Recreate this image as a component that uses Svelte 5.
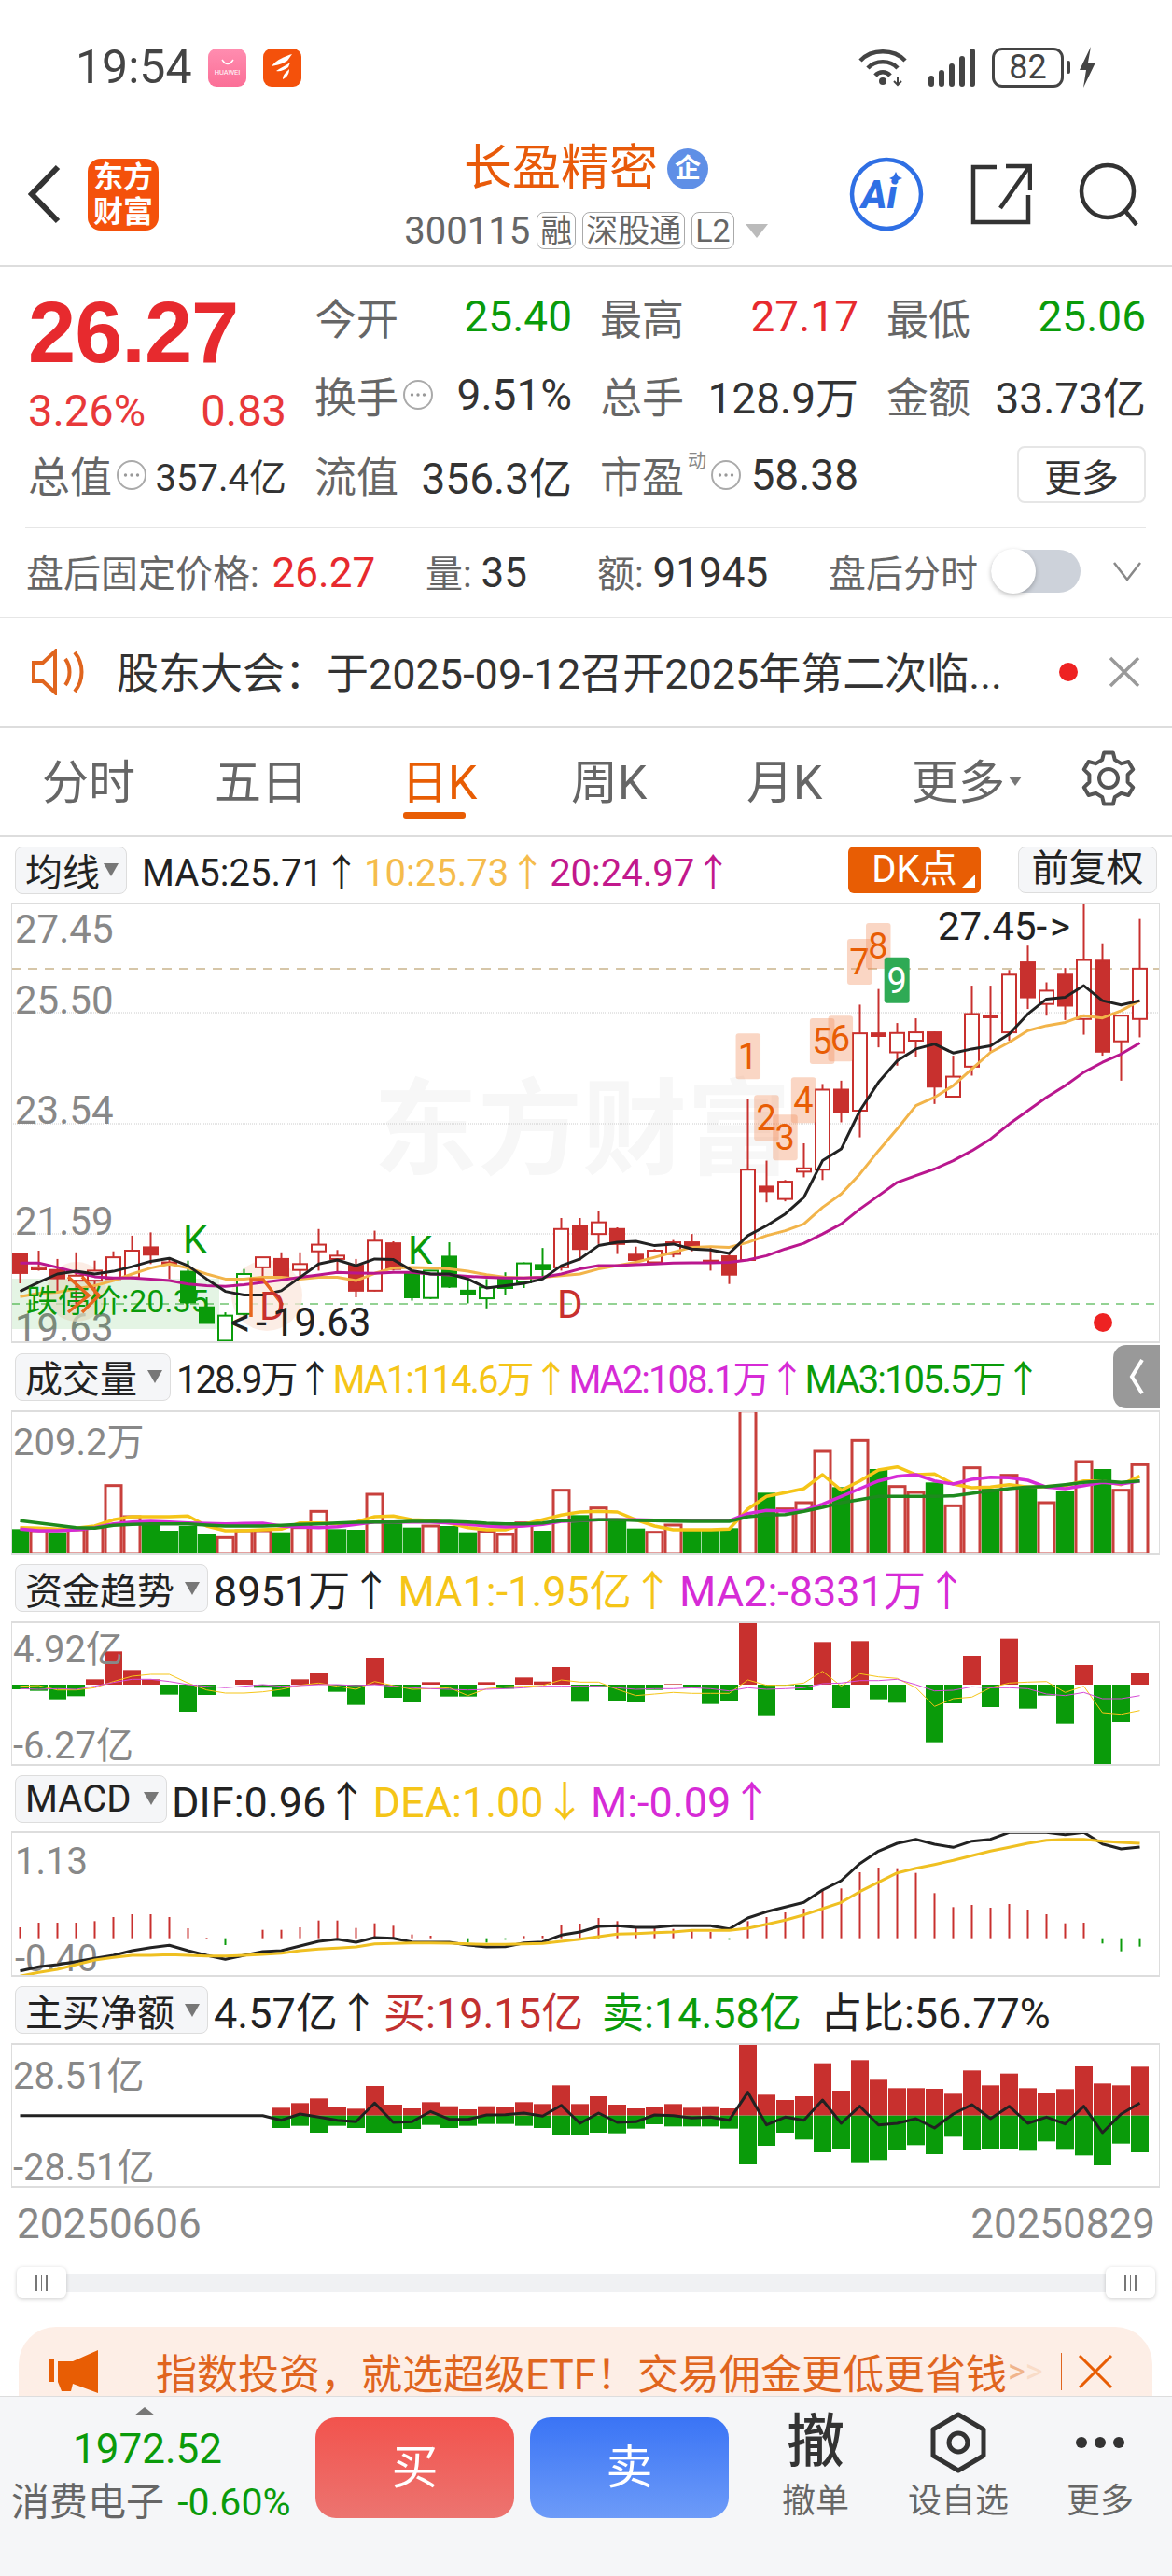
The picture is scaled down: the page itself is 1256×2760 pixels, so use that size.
<script>
	// all chart values below are read off in "zoom" units, converted to page y by each chart
	const xAt = (i) => 21.5 + 20 * i;
	const k = (z) => 890 + z / 2.8;
	const low = (z) => 1440 + z / 3;
	const macdY = (z) => 1900 + z / 3;
	const line = (ys, conv, from = 0) =>
		ys.map((z, i) => `${xAt(i + from)},${conv(z).toFixed(1)}`).join(' ');

	// high, top, bottom, low, kind: r filled red, h hollow red, g filled green, o hollow green
	const candles = [
		[1270, 1270, 1327, 1358, 'r'], [1260, 1310, 1316, 1320, 'h'], [1285, 1318, 1343, 1385, 'r'],
		[1265, 1335, 1350, 1420, 'h'], [1290, 1320, 1350, 1400, 'h'], [1262, 1280, 1345, 1350, 'h'],
		[1215, 1260, 1340, 1345, 'h'], [1205, 1250, 1272, 1300, 'r'], [1280, 1295, 1300, 1345, 'h'],
		[1290, 1323, 1415, 1420, 'g'], [1400, 1430, 1477, 1478, 'g'], [1445, 1455, 1530, 1540, 'o'],
		[1315, 1330, 1450, 1455, 'o'], [1280, 1280, 1310, 1345, 'h'], [1265, 1285, 1340, 1345, 'r'],
		[1265, 1300, 1318, 1340, 'h'], [1195, 1242, 1262, 1320, 'h'], [1258, 1275, 1285, 1330, 'h'],
		[1285, 1305, 1380, 1400, 'r'], [1200, 1230, 1380, 1382, 'h'], [1232, 1238, 1315, 1320, 'r'],
		[1320, 1330, 1400, 1410, 'g'], [1320, 1320, 1402, 1405, 'o'], [1235, 1278, 1368, 1372, 'g'],
		[1350, 1380, 1390, 1418, 'g'], [1345, 1370, 1403, 1433, 'o'], [1325, 1345, 1372, 1392, 'g'],
		[1295, 1298, 1355, 1372, 'o'], [1252, 1303, 1316, 1345, 'g'], [1162, 1195, 1310, 1320, 'h'],
		[1162, 1185, 1255, 1290, 'r'], [1140, 1175, 1210, 1240, 'h'], [1190, 1195, 1240, 1270, 'r'],
		[1248, 1272, 1288, 1295, 'r'], [1255, 1260, 1295, 1298, 'h'], [1228, 1235, 1270, 1280, 'h'],
		[1210, 1235, 1250, 1262, 'r'], [1250, 1290, 1296, 1320, 'r'], [1268, 1277, 1332, 1360, 'r'],
		[805, 1017, 1288, 1290, 'h'], [990, 1068, 1082, 1115, 'r'], [1048, 1053, 1105, 1112, 'h'],
		[938, 1013, 1023, 1040, 'h'], [760, 777, 1017, 1048, 'h'], [750, 777, 845, 875, 'r'],
		[522, 608, 840, 920, 'h'], [475, 608, 616, 650, 'r'], [577, 607, 665, 705, 'h'],
		[563, 605, 630, 678, 'h'], [603, 605, 768, 820, 'r'], [675, 738, 798, 800, 'h'],
		[465, 550, 708, 735, 'h'], [465, 555, 560, 662, 'r'], [418, 432, 605, 630, 'h'],
		[345, 395, 500, 535, 'r'], [455, 480, 520, 555, 'h'], [412, 432, 525, 568, 'r'],
		[215, 388, 565, 612, 'h'], [338, 390, 663, 675, 'r'], [555, 555, 632, 750, 'h'],
		[265, 414, 565, 620, 'h']
	];
	const ma5 = [1382,1355,1330,1322,1330,1322,1308,1292,1283,1305,1345,1382,1393,1393,1380,1340,1300,1288,1305,1285,1287,1320,1330,1330,1345,1372,1365,1358,1345,1305,1285,1245,1235,1232,1245,1240,1255,1258,1268,1215,1185,1150,1100,990,955,840,755,690,655,640,667,655,645,610,550,505,500,465,510,523,510];
	const ma10 = [1398,1388,1385,1375,1365,1350,1330,1312,1300,1312,1330,1345,1345,1340,1340,1345,1340,1340,1350,1328,1312,1310,1312,1315,1322,1332,1340,1342,1340,1335,1330,1315,1305,1295,1280,1265,1250,1248,1250,1235,1215,1200,1180,1130,1090,1030,960,895,825,800,765,715,665,635,600,585,575,555,562,540,510];
	const ma20 = [1297,1297,1310,1325,1338,1342,1342,1345,1350,1360,1365,1367,1362,1355,1348,1340,1333,1325,1327,1328,1325,1325,1330,1333,1337,1340,1342,1342,1340,1330,1315,1305,1305,1302,1300,1297,1296,1296,1295,1288,1275,1255,1238,1210,1180,1135,1095,1055,1035,1015,990,960,925,880,840,800,765,725,695,670,637];

	const badges = [
		['1', 378, 608], ['2', 428, 793], ['3', 479, 852], ['4', 529, 740], ['5', 580, 563],
		['6', 630, 555], ['7', 682, 325], ['8', 733, 277]
	];

	// volume: top of bar, g = green filled, r = red hollow
	const vol = [[595,'g'],[600,'r'],[605,'g'],[597,'r'],[590,'r'],[455,'r'],[555,'r'],[580,'g'],[600,'g'],[585,'g'],[612,'g'],[622,'r'],[600,'r'],[600,'r'],[605,'g'],[590,'r'],[538,'r'],[595,'g'],[597,'g'],[483,'r'],[575,'g'],[590,'g'],[585,'r'],[585,'g'],[605,'g'],[603,'r'],[612,'r'],[575,'r'],[600,'g'],[470,'r'],[550,'g'],[527,'r'],[565,'g'],[593,'g'],[605,'r'],[582,'r'],[600,'g'],[595,'g'],[592,'g'],[215,'r'],[478,'g'],[530,'r'],[510,'r'],[345,'r'],[460,'g'],[310,'r'],[402,'g'],[458,'r'],[477,'r'],[445,'g'],[520,'r'],[398,'r'],[465,'g'],[422,'r'],[460,'g'],[510,'r'],[472,'g'],[378,'r'],[402,'g'],[470,'r'],[388,'r']];
	const volM1 = [590,592,595,592,585,565,555,555,555,553,585,600,600,597,595,575,575,578,572,555,553,565,567,575,590,597,597,580,565,550,540,538,540,565,585,597,597,597,595,530,490,478,465,420,470,440,405,395,420,418,450,462,460,452,460,458,455,440,440,452,425];
	const volM2 = [595,600,600,597,590,578,572,570,572,575,577,578,577,576,585,588,590,587,580,572,572,572,572,575,580,585,588,585,580,570,568,565,565,565,566,567,568,568,568,545,535,537,535,515,490,465,440,425,420,440,450,435,428,430,438,460,465,455,445,450,440];
	const volM3 = [568,575,583,590,592,583,580,578,578,578,582,585,585,585,583,580,578,575,573,572,572,570,570,570,572,576,578,578,575,568,567,565,565,567,568,569,570,570,570,555,550,548,538,525,510,500,490,490,490,490,488,480,472,465,460,458,452,445,440,445,440];

	const flow = [1110,1115,1142,1132,1078,988,1048,1078,1127,1182,1128,1095,1080,1105,1133,1078,1058,1118,1160,1008,1137,1152,1087,1133,1133,1087,1108,1072,1085,1038,1150,1100,1148,1152,1112,1093,1105,1157,1148,892,1196,1097,1113,958,1170,955,1142,1153,1095,1280,1155,1002,1167,947,1172,1130,1220,1032,1355,1215,1058];
	const flowM1 = [1100,1098,1112,1112,1105,1085,1068,1062,1062,1090,1112,1122,1122,1118,1110,1097,1090,1100,1110,1085,1098,1110,1108,1105,1130,1108,1102,1100,1098,1080,1087,1087,1110,1130,1125,1120,1123,1123,1123,1080,1097,1097,1090,1052,1100,1060,1070,1075,1105,1165,1140,1135,1105,1090,1087,1085,1120,1100,1185,1190,1178];
	const flowM2 = [1108,1110,1108,1110,1100,1088,1078,1078,1085,1095,1100,1105,1100,1095,1100,1098,1095,1095,1098,1095,1100,1105,1108,1110,1112,1110,1108,1105,1100,1100,1100,1100,1105,1110,1108,1108,1105,1108,1115,1105,1110,1108,1105,1092,1090,1082,1082,1078,1095,1115,1113,1102,1105,1105,1108,1125,1130,1120,1140,1140,1130];

	const macd = [495,480,480,480,475,462,453,453,462,498,528,552,530,503,503,495,473,473,497,482,490,518,522,530,544,544,535,523,522,487,483,465,475,495,497,500,505,510,535,475,462,447,435,375,370,318,303,305,320,385,430,423,432,420,438,453,482,480,547,572,557];
	const dif = [635,622,615,605,595,585,570,560,553,570,585,598,585,573,570,555,540,533,543,528,530,542,543,543,552,558,557,545,542,520,510,492,490,495,495,490,490,490,500,465,445,430,415,375,345,290,250,225,212,228,238,218,212,190,190,190,197,190,227,243,237];
	const dea = [652,640,630,615,600,592,585,585,583,585,587,587,585,582,578,570,565,562,558,548,547,545,545,546,548,550,550,548,547,540,533,525,517,515,512,510,505,505,505,498,485,472,455,435,415,380,350,320,305,293,280,265,250,238,225,215,212,212,218,222,225];

	// net buy starts at bar 14: top, bottom
	const net = [[1075,1140],[1060,1133],[1045,1155],[1072,1133],[1078,1140],[1005,1155],[1065,1155],[1077,1143],[1057,1130],[1070,1140],[1080,1133],[1070,1127],[1073,1127],[1057,1133],[1063,1140],[1003,1163],[1063,1163],[1038,1155],[1065,1157],[1077,1142],[1072,1128],[1063,1135],[1075,1135],[1070,1135],[1077,1142],[868,1257],[1033,1197],[1050,1155],[1038,1177],[932,1218],[1020,1207],[922,1250],[985,1243],[1012,1212],[1012,1195],[1014,1224],[1030,1168],[955,1212],[1003,1209],[965,1207],[1012,1213],[1027,1183],[1015,1210],[942,1228],[997,1260],[1003,1190],[943,1218]];
	const netLine = [1100,1100,1100,1100,1100,1100,1100,1100,1100,1100,1100,1100,1100,1100,1115,1095,1105,1115,1120,1060,1122,1120,1087,1112,1112,1098,1097,1092,1102,1067,1125,1092,1122,1120,1098,1100,1108,1105,1115,1025,1130,1105,1115,1050,1125,1070,1130,1125,1110,1140,1095,1065,1110,1070,1125,1105,1127,1070,1155,1095,1060];

	const gear = [];
	for (let n = 0; n < 6; n++) {
		const a = n * 60 - 90;
		for (const [d, r] of [[-19, 21], [-10, 28], [10, 28], [19, 21]]) {
			const t = ((a + d) * Math.PI) / 180;
			gear.push(`${(30 + r * Math.cos(t)).toFixed(1)},${(30 + r * Math.sin(t)).toFixed(1)}`);
		}
	}
</script>

{#snippet dots()}
	<svg class="dots" width="34" height="34" viewBox="0 0 34 34">
		<circle cx="17" cy="17" r="15" fill="none" stroke="#aaa" stroke-width="2" />
		<circle cx="10.5" cy="17" r="1.7" fill="#999" /><circle cx="17" cy="17" r="1.7" fill="#999" /><circle cx="23.5" cy="17" r="1.7" fill="#999" />
	</svg>
{/snippet}

{#snippet pick(name, cls)}
	<div class="pick {cls}">{name}<i class="tri"></i></div>
{/snippet}

<div class="page">
	<div class="status">
		<span class="time">19:54</span>
		<div class="app pink">
			<svg width="16" height="8" viewBox="0 0 16 8"><path d="M2 1q6 9 12 0" fill="none" stroke="#fff" stroke-width="1.5" /></svg>
			<span>HUAWEI</span>
		</div>
		<div class="app fox">
			<svg width="41" height="41" viewBox="0 0 41 41" fill="#fff">
				<path d="M31 6C24 8 14 12 9 19c6-1 13-3 17-6z" /><path d="M29 15c-4 3-11 6-15 9 4 1 9-1 13-4z" /><path d="M28 22c-3 3-7 6-7 11 4-2 7-5 7-11z" />
			</svg>
		</div>
		<div class="sys">
			<svg class="wifi" width="52" height="42" viewBox="0 0 52 42" fill="none" stroke="#444" stroke-width="4.5">
				<path d="M2 14C14 1 38 1 50 14" /><path d="M10 22C18 13 34 13 42 22" /><path d="M18 30C22 25 30 25 34 30" />
				<circle cx="26" cy="36" r="4" fill="#444" stroke="none" />
				<path d="M42 31v9M38 36l4 4 4-4" stroke-width="2" />
			</svg>
			<svg class="signal" width="52" height="42" viewBox="0 0 52 42" fill="#444">
				<rect x="0" y="30" width="6" height="12" rx="3" /><rect x="11" y="24" width="6" height="18" rx="3" /><rect x="22" y="17" width="6" height="25" rx="3" /><rect x="33" y="9" width="6" height="33" rx="3" /><rect x="44" y="1" width="6" height="41" rx="3" />
			</svg>
			<div class="batt">82</div>
			<i class="nub"></i>
			<svg class="bolt" width="20" height="44" viewBox="0 0 20 44"><path d="M14 0L2 25h7L6 44 19 17h-8z" fill="#444" /></svg>
		</div>
	</div>

	<div class="nav">
		<div class="nav-left">
			<svg width="36" height="64" viewBox="0 0 36 64"><path d="M32 3L4 32l28 29" fill="none" stroke="#333" stroke-width="6" /></svg>
			<div class="logo">东方<br />财富</div>
		</div>
		<div class="nav-mid">
			<div class="title">长盈精密<span class="qi">企</span></div>
			<div class="code">
				<span>300115</span><b class="tag">融</b><b class="tag">深股通</b><b class="tag">L2</b><i class="tri big"></i>
			</div>
		</div>
		<div class="nav-right">
			<svg width="80" height="82" viewBox="0 0 80 82">
				<circle cx="40" cy="41" r="37" fill="none" stroke="#2F6FE4" stroke-width="4.5" />
				<text x="13" y="56" class="ai">Ai</text>
				<path d="M50 17l2.500 5 4.500 2-4.500 2-2.500 5-2.500-5-4.500-2 4.500-2z" fill="#2F6FE4" />
			</svg>
			<svg width="66" height="66" viewBox="0 0 66 66" fill="none" stroke="#333" stroke-width="4.5">
				<path d="M28 4H3v59h59V34" /><path d="M38 3h26v26" /><path d="M62 5L32 48" />
			</svg>
			<svg width="66" height="68" viewBox="0 0 66 68" fill="none" stroke="#333" stroke-width="4.5">
				<circle cx="31" cy="31" r="28" /><path d="M50 52l12 15" />
			</svg>
		</div>
	</div>

	<div class="quote">
		<div class="price-cell">
			<div class="price">26.27</div>
			<div class="chg"><span>3.26%</span><span>0.83</span></div>
		</div>
		<div class="cell"><em>今开</em><span class="up-g">25.40</span></div>
		<div class="cell"><em>最高</em><span class="up-r">27.17</span></div>
		<div class="cell"><em>最低</em><span class="up-g">25.06</span></div>
		<div class="cell"><em>换手{@render dots()}</em><span>9.51%</span></div>
		<div class="cell"><em>总手</em><span>128.9万</span></div>
		<div class="cell"><em>金额</em><span>33.73亿</span></div>
		<div class="cell small"><em>总值{@render dots()}</em><span>357.4亿</span></div>
		<div class="cell"><em>流值</em><span>356.3亿</span></div>
		<div class="cell"><em>市盈<sup>动</sup>{@render dots()}</em><span>58.38</span></div>
		<div class="cell end"><button class="more">更多</button></div>
	</div>
	<div class="rule"></div>

	<div class="after">
		<span class="a1">盘后固定价格: <b>26.27</b></span>
		<span class="a2">量: <u>35</u></span>
		<span class="a3">额: <u>91945</u></span>
		<span class="a4">盘后分时</span>
		<div class="toggle"><i></i></div>
		<svg width="32" height="22" viewBox="0 0 32 22"><path d="M2 2l14 18L30 2" fill="none" stroke="#888" stroke-width="2.5" /></svg>
	</div>

	<div class="notice">
		<svg width="58" height="50" viewBox="0 0 58 50" fill="none" stroke="#E0651E" stroke-width="4">
			<path d="M3 15h10L26 3v44L13 35H3z" /><path d="M37 11c6 8 6 20 0 28" /><path d="M47 4c10 12 10 30 0 42" />
		</svg>
		<span class="n-text">股东大会&#xFF1A;于2025-09-12召开2025年第二次临...</span>
		<i class="red-dot"></i>
		<svg width="34" height="34" viewBox="0 0 34 34"><path d="M2 2l30 30M32 2L2 32" stroke="#999" stroke-width="3.5" /></svg>
	</div>

	<div class="tabs">
		<span class="t1">分时</span><span class="t2">五日</span><span class="t3 on">日K</span><span class="t4">周K</span><span class="t5">月K</span>
		<span class="t-more">更多<i class="tri"></i></span>
		<svg width="60" height="60" viewBox="0 0 60 60" fill="none" stroke="#555" stroke-width="4">
			<polygon points={gear.join(' ')} stroke-linejoin="round" /><circle cx="30" cy="30" r="10" />
		</svg>
	</div>

	<div class="head h1">
		{@render pick('均线', 'w1')}
		<span class="lg">MA5:25.71<i class="ar">↑</i></span><span class="lg c-or">10:25.73<i class="ar">↑</i></span><span class="lg c-pk">20:24.97<i class="ar">↑</i></span>
		<div class="dk">DK点<i></i></div>
		<div class="adj">前复权</div>
	</div>
	<div class="box">
		<svg width="1231" height="468" viewBox="12 969 1231 468">
			<text x="400" y="1250" class="mark">东方财富</text>
			<line x1="12" x2="1243" y1="1038" y2="1038" class="g-dash" />
			<line x1="12" x2="1243" y1="1085" y2="1085" class="g-dot" />
			<line x1="12" x2="1243" y1="1204" y2="1204" class="g-dot" />
			<line x1="12" x2="1243" y1="1322" y2="1322" class="g-dot" />
			<line x1="12" x2="1243" y1="1397" y2="1397" class="g-green" />
			<text x="16" y="1010" class="axis">27.45</text>
			<text x="16" y="1086" class="axis">25.50</text>
			<text x="16" y="1204" class="axis">23.54</text>
			<text x="16" y="1323" class="axis">21.59</text>
			<text x="16" y="1437" class="axis">19.63</text>

			<circle cx="82" cy="1384" r="32" fill="#fbe6da" opacity=".7" />
			<circle cx="286" cy="1388" r="38" fill="#fbe6da" opacity=".7" />
			<rect x="12" y="1370" width="223" height="54" fill="#0a9b0a" opacity=".11" />

			{#each candles as [hi, top, bot, lo, kind], i}
				{@const col = kind === 'g' || kind === 'o' ? '#0A9B0A' : '#C8302E'}
				<line x1={xAt(i)} x2={xAt(i)} y1={k(hi)} y2={k(lo)} stroke={col} stroke-width="2" />
				<rect
					x={xAt(i) - 7.5}
					y={k(top)}
					width="15"
					height={k(bot) - k(top)}
					fill={kind === 'r' || kind === 'g' ? col : '#fff'}
					stroke={col}
					stroke-width="2"
				/>
			{/each}
			<polyline points={line(ma10, k)} class="ln" stroke="#F2B44A" />
			<polyline points={line(ma20, k)} class="ln" stroke="#B9178E" />
			<polyline points={line(ma5, k)} class="ln" stroke="#222" />

			<text x="28" y="1406" class="limit">跌停价:20.35</text>
			<path d="M73 1368l22 20-22 18M88 1368l18 20-18 18" fill="none" stroke="#E8661E" stroke-width="3.5" />
			<path d="M269 1411v-40h13l20 26-4 12" fill="none" stroke="#E8661E" stroke-width="3.5" />
			<text x="196" y="1343" class="kd green">K</text>
			<text x="437" y="1354" class="kd green">K</text>
			<text x="597" y="1412" class="kd red">D</text>
			<text x="278" y="1414" class="kd red">D</text>
			<text x="247" y="1431" class="note"><tspan class="wide">&lt;</tspan><tspan class="wide">-</tspan>19.63</text>
			<text x="1005" y="1007" class="note">27.45<tspan class="wide2">-&gt;</tspan></text>

			{#each badges as [n, bx, by]}
				<rect x={640 + bx / 2.545} y={k(by)} width="26.5" height="49" rx="3" fill="#F08A55" opacity=".35" />
				<text x={653 + bx / 2.545} y={k(by) + 38} class="bn">{n}</text>
			{/each}
			<rect x={640 + 783 / 2.545} y={k(380)} width="27" height="49" rx="3" fill="#2FAA55" />
			<text x={653.5 + 783 / 2.545} y={k(380) + 38} class="bn white">9</text>
			<circle cx="1182" cy="1417" r="10" fill="#EE2222" />
		</svg>
	</div>

	<div class="head h2">
		{@render pick('成交量', 'w2')}
		<span class="lg">128.9万<i class="ar">↑</i></span><span class="lg c-gd">MA1:114.6万<i class="ar">↑</i></span><span class="lg c-mg">MA2:108.1万<i class="ar">↑</i></span><span class="lg c-gn">MA3:105.5万<i class="ar">↑</i></span>
		<div class="fold"><svg width="16" height="40" viewBox="0 0 16 40"><path d="M14 2L3 20l11 18" fill="none" stroke="#fff" stroke-width="4" /></svg></div>
	</div>
	<div class="box">
		<svg width="1231" height="151" viewBox="12 1513 1231 151">
			{#each vol as [top, kind], i}
				{#if kind === 'g'}
					<rect x={xAt(i) - 9.7} y={low(top)} width="19.4" height={1665 - low(top)} fill="#0A9B0A" />
				{:else}
					<rect x={xAt(i) - 8.5} y={low(top)} width="17" height={1665 - low(top)} fill="#fff" stroke="#C8403C" stroke-width="3" />
				{/if}
			{/each}
			<polyline points={line(volM1, low)} class="ln thick" stroke="#F5C518" />
			<polyline points={line(volM2, low)} class="ln thick" stroke="#D62BD6" />
			<polyline points={line(volM3, low)} class="ln thick" stroke="#1E8A1E" />
			<text x="14" y="1559" class="axis sm">209.2万</text>
		</svg>
	</div>

	<div class="head h3">
		{@render pick('资金趋势', 'w3')}
		<span class="lg">8951万<i class="ar">↑</i></span><span class="lg c-gd">MA1:-1.95亿<i class="ar">↑</i></span><span class="lg c-mg">MA2:-8331万<i class="ar">↑</i></span>
	</div>
	<div class="box">
		<svg width="1231" height="151" viewBox="12 1739 1231 151">
			{#each flow as z, i}
				<rect
					x={xAt(i) - 9.5}
					y={low(Math.min(z, 1095))}
					width="19"
					height={Math.abs(z - 1095) / 3}
					fill={z < 1095 ? '#C8302E' : '#0A9B0A'}
				/>
			{/each}
			<text x="14" y="1781" class="axis sm">4.92亿</text>
			<text x="14" y="1884" class="axis sm">-6.27亿</text>
			<polyline points={line(flowM1, low)} class="ln hair" stroke="#F5C518" />
			<polyline points={line(flowM2, low)} class="ln hair" stroke="#D64BD6" />
		</svg>
	</div>

	<div class="head h4">
		{@render pick('MACD', 'w4')}
		<span class="lg">DIF:0.96<i class="ar">↑</i></span><span class="lg c-gd">DEA:1.00<i class="ar">↓</i></span><span class="lg c-mg">M:-0.09<i class="ar">↑</i></span>
	</div>
	<div class="box">
		<svg width="1231" height="152" viewBox="12 1964 1231 152">
			{#each macd as z, i}
				<line
					x1={xAt(i)}
					x2={xAt(i)}
					y1={macdY(530)}
					y2={macdY(z)}
					stroke={z < 530 ? '#C8302E' : '#0A9B0A'}
					stroke-width="2"
				/>
			{/each}
			<text x="16" y="2008" class="axis sm">1.13</text>
			<text x="16" y="2112" class="axis sm">-0.40</text>
			<polyline points={line(dif, macdY)} class="ln" stroke="#222" />
			<polyline points={line(dea, macdY)} class="ln" stroke="#EFC022" />
		</svg>
	</div>

	<div class="head h5">
		{@render pick('主买净额', 'w5')}
		<span class="lg">4.57亿<i class="ar">↑</i></span><span class="lg c-rd">买:19.15亿</span><span class="lg c-gn">卖:14.58亿</span><span class="lg">占比:56.77%</span>
	</div>
	<div class="box">
		<svg width="1231" height="151" viewBox="12 2191 1231 151">
			{#each net as [top, bot], i}
				<rect x={xAt(i + 14) - 9.5} y={macdY(top)} width="19" height={(1100 - top) / 3} fill="#C8302E" />
				<rect x={xAt(i + 14) - 9.5} y={macdY(1100)} width="19" height={(bot - 1100) / 3} fill="#0A9B0A" />
			{/each}
			<text x="14" y="2238" class="axis sm">28.51亿</text>
			<text x="14" y="2336" class="axis sm">-28.51亿</text>
			<polyline points={line(netLine, macdY)} class="ln" stroke="#222" />
		</svg>
	</div>

	<div class="dates"><span>20250606</span><span>20250829</span></div>

	<div class="scroller">
		<div class="grip"><i></i><i></i><i></i></div>
		<div class="grip"><i></i><i></i><i></i></div>
	</div>

	<div class="banner">
		<svg width="54" height="46" viewBox="0 0 54 46" fill="#E85D04">
			<rect x="0" y="10" width="6" height="24" /><path d="M10 12h16L53 0v46L26 36l-2 8h-10l-4-10z" />
		</svg>
		<span class="b-text">指数投资&#xFF0C;就选超级ETF&#xFF01;交易佣金更低更省钱</span>
		<span class="b-arrow">&gt;<span class="fade">&gt;</span></span>
		<i class="b-sep"></i>
		<svg width="38" height="38" viewBox="0 0 38 38"><path d="M2 2l34 34M36 2L2 36" stroke="#E85D04" stroke-width="3" /></svg>
	</div>

	<div class="foot">
		<div class="sector">
			<i class="caret"></i>
			<div class="s-val">1972.52</div>
			<div class="s-name">消费电子 <span>-0.60%</span></div>
		</div>
		<div class="trade buy">买</div>
		<div class="trade sell">卖</div>
		<div class="act a-cancel"><b>撤</b><span>撤单</span></div>
		<div class="act a-fav">
			<svg width="62" height="66" viewBox="0 0 62 66" fill="none" stroke="#333" stroke-width="5" stroke-linejoin="round">
				<path d="M31 3l27 16v28L31 63 4 47V19z" /><circle cx="31" cy="33" r="10" />
			</svg>
			<span>设自选</span>
		</div>
		<div class="act a-more">
			<svg width="54" height="66" viewBox="0 0 54 66" fill="#333"><circle cx="7" cy="33" r="6" /><circle cx="27" cy="33" r="6" /><circle cx="47" cy="33" r="6" /></svg>
			<span>更多</span>
		</div>
	</div>
</div>

<style>
	:global(body) {
		margin: 0;
		background: #fff;
	}
	.page {
		width: 1256px;
		height: 2760px;
		overflow: hidden;
		background: #fff;
		font-family: Roboto, 'Noto Sans CJK SC', sans-serif;
		color: #333;
	}
	em,
	i,
	u {
		font-style: normal;
		text-decoration: none;
	}
	svg {
		display: block;
		flex: none;
	}

	.status {
		height: 144px;
		display: flex;
		align-items: center;
		padding: 0 81px;
		box-sizing: border-box;
	}
	.time {
		font-size: 50px;
		color: #444;
		width: 142px;
	}
	.app {
		width: 41px;
		height: 41px;
		border-radius: 9px;
		margin-right: 18px;
	}
	.pink {
		background: linear-gradient(#ff8db0, #fb6f97);
		display: flex;
		flex-direction: column;
		align-items: center;
		justify-content: center;
		color: #fff;
		font-size: 7.5px;
		gap: 2px;
	}
	.fox {
		background: #f4510b;
	}
	.sys {
		margin-left: auto;
		display: flex;
		align-items: center;
	}
	.signal {
		margin-left: 23px;
	}
	.batt {
		margin-left: 16px;
		width: 77px;
		height: 43px;
		box-sizing: border-box;
		border: 3px solid #444;
		border-radius: 11px;
		font-size: 36px;
		line-height: 36px;
		text-align: center;
		color: #444;
	}
	.nub {
		width: 4px;
		height: 14px;
		margin-left: 3px;
		background: #444;
		border-radius: 2px;
	}
	.bolt {
		margin-left: 8px;
	}

	.nav {
		height: 140px;
		border-bottom: 2px solid #ddd;
		display: grid;
		grid-template-columns: 1fr auto 1fr;
	}
	.nav-left {
		display: flex;
		align-items: center;
		padding: 0 0 12px 30px;
		gap: 28px;
	}
	.logo {
		width: 76px;
		height: 77px;
		border-radius: 14px;
		background: #f4510b;
		color: #fff;
		font-size: 32px;
		font-weight: 700;
		line-height: 37px;
		text-align: center;
		padding-top: 2px;
		box-sizing: border-box;
	}
	.nav-mid {
		display: flex;
		flex-direction: column;
		align-items: center;
	}
	.title {
		height: 70px;
		margin-top: 2px;
		font-size: 52px;
		line-height: 70px;
		color: #e85a0a;
		display: flex;
		align-items: center;
	}
	.qi {
		width: 44px;
		height: 44px;
		border-radius: 50%;
		margin-left: 10px;
		background: #5f8fe6;
		color: #fff;
		font-size: 28px;
		font-weight: 700;
		line-height: 44px;
		text-align: center;
	}
	.code {
		display: flex;
		align-items: center;
		gap: 7px;
		font-size: 40px;
		color: #666;
		height: 56px;
		margin-top: 3px;
	}
	.tag {
		font-weight: 400;
		font-size: 34px;
		line-height: 36px;
		padding: 1px 3px;
		border: 1.5px solid #aaa;
		border-radius: 8px;
	}
	.tri {
		display: inline-block;
		width: 0;
		height: 0;
		border: 8px solid transparent;
		border-top: 14px solid #777;
		border-bottom: 0;
		margin-left: 4px;
		vertical-align: middle;
	}
	.tri.big {
		border-width: 15px 12px 0;
		border-top-color: #bbb;
		margin-left: 5px;
	}
	.nav-right {
		display: flex;
		align-items: center;
		justify-content: flex-end;
		padding: 0 34px 12px 0;
		gap: 50px;
	}
	.ai {
		font: italic 800 42px Roboto, sans-serif;
		fill: #2f6fe4;
	}

	.quote {
		height: 279px;
		box-sizing: border-box;
		padding: 11px 28px 0 30px;
		display: grid;
		grid-template-columns: 277px 276px 277px 278px;
		grid-template-rows: 84px 84px 87px;
		column-gap: 30px;
		font-size: 46px;
	}
	.price-cell {
		grid-row: span 2;
	}
	.price {
		font: 700 92px/84px 'Liberation Sans', sans-serif;
		color: #e72a2e;
		letter-spacing: -1px;
		margin-top: 17px;
	}
	.chg {
		display: flex;
		justify-content: space-between;
		font-size: 47px;
		line-height: 56px;
		color: #e8383a;
		margin-top: 14px;
	}
	.cell {
		display: flex;
		justify-content: space-between;
		align-items: center;
		white-space: nowrap;
		color: #333;
	}
	.cell em {
		font-size: 45px;
		color: #666;
		display: flex;
		align-items: center;
	}
	.cell.small > span {
		font-size: 40px;
	}
	.cell.end {
		justify-content: flex-end;
	}
	.cell sup {
		font-size: 20px;
		line-height: 20px;
		align-self: flex-start;
		margin: 8px 0 0 4px;
		color: #888;
	}
	.up-g {
		color: #0a9b0a;
	}
	.up-r {
		color: #e72a2e;
	}
	.dots {
		margin-left: 4px;
	}
	.more {
		width: 138px;
		height: 61px;
		background: #fff;
		border: 2px solid #e6e6e6;
		border-radius: 8px;
		font: 400 40px 'Noto Sans CJK SC', sans-serif;
		color: #333;
		padding: 0;
	}
	.rule {
		height: 1px;
		margin: 0 28px 0 27px;
		background: #e6e6e6;
	}

	.after {
		height: 96px;
		box-sizing: border-box;
		padding: 0 0 3px 28px;
		border-bottom: 1px solid #e6e6e6;
		display: flex;
		align-items: center;
		font-size: 40px;
		color: #666;
		white-space: nowrap;
	}
	.after b {
		font-weight: 400;
		color: #e72a2e;
		font-size: 44px;
		margin-left: 4px;
	}
	.after u {
		color: #333;
		font-size: 44px;
	}
	.a1 {
		width: 428px;
	}
	.a2 {
		width: 184px;
	}
	.a3 {
		width: 248px;
	}
	.a4 {
		width: 174px;
	}
	.toggle {
		width: 96px;
		height: 46px;
		border-radius: 23px;
		background: #cdd2da;
		position: relative;
		margin-right: 34px;
	}
	.toggle i {
		position: absolute;
		left: 0;
		top: -1px;
		width: 48px;
		height: 48px;
		border-radius: 50%;
		background: #fff;
		box-shadow: 0 2px 5px rgba(0, 0, 0, 0.25);
	}

	.notice {
		height: 116px;
		box-sizing: content-box;
		border-bottom: 2px solid #ddd;
		display: flex;
		align-items: center;
		padding: 0 34px 0 33px;
	}
	.n-text {
		margin-left: 34px;
		padding-bottom: 4px;
		font-size: 45px;
		width: 1010px;
		white-space: nowrap;
		color: #333;
		box-sizing: border-box;
	}
	.red-dot {
		width: 20px;
		height: 20px;
		border-radius: 50%;
		background: #ee2222;
		margin-right: 33px;
	}

	.tabs {
		height: 117px;
		box-sizing: border-box;
		padding: 0 0 8px 45px;
		border-bottom: 2px solid #ddd;
		display: flex;
		align-items: center;
		font-size: 50px;
		color: #666;
		position: relative;
		white-space: nowrap;
	}
	.t1 {
		width: 185px;
	}
	.t2 {
		width: 200px;
	}
	.t3 {
		width: 182px;
	}
	.t4 {
		width: 188px;
	}
	.t5 {
		width: 177px;
	}
	.tabs .on {
		color: #e85d04;
		position: relative;
	}
	.tabs .on::after {
		content: '';
		position: absolute;
		left: 2px;
		top: 72px;
		width: 67px;
		height: 7px;
		border-radius: 3px;
		background: #e85d04;
	}
	.tabs .t-more {
		width: 181px;
	}
	.tabs .t-more .tri {
		margin-bottom: 10px;
		border-width: 10px 7px 0;
	}

	.head {
		display: flex;
		align-items: center;
		padding-left: 16px;
		font-size: 45px;
		color: #222;
		white-space: nowrap;
		position: relative;
		box-sizing: border-box;
	}
	.ar {
		margin-right: -0.35em;
	}
	.h1 {
		height: 70px;
		gap: 18px;
		font-size: 40px;
	}
	.h2 {
		height: 72px;
		gap: 15px;
		font-size: 40px;
		letter-spacing: -2px;
	}
	.h3 {
		height: 71px;
		gap: 22px;
	}
	.h4 {
		height: 70px;
		gap: 21px;
	}
	.h5 {
		height: 71px;
		gap: 20px;
	}
	.pick {
		height: 51px;
		box-sizing: border-box;
		background: #f5f6f8;
		border: 1.5px solid #ddd;
		border-radius: 8px;
		display: flex;
		align-items: center;
		justify-content: space-between;
		padding: 0 8px 0 10px;
		font-size: 40px;
		letter-spacing: 0;
		color: #222;
	}
	.w1 {
		width: 120px;
		margin-right: -2px;
	}
	.w2 {
		width: 167px;
		margin-right: -9px;
	}
	.w3 {
		width: 207px;
		margin-right: -16px;
	}
	.w4 {
		width: 163px;
		margin-right: -16px;
	}
	.w5 {
		width: 207px;
		margin-right: -14px;
	}
	.lg {
		flex: none;
	}
	.c-or {
		color: #f5bc4c;
	}
	.c-pk {
		color: #c2188c;
	}
	.c-gd {
		color: #f5c518;
	}
	.c-mg {
		color: #d62bd6;
	}
	.c-gn {
		color: #0a9b0a;
	}
	.c-rd {
		color: #c23030;
	}
	.dk {
		margin-left: auto;
		width: 142px;
		height: 50px;
		background: #e85d04;
		color: #fff;
		border-radius: 6px;
		text-align: center;
		line-height: 50px;
		position: relative;
	}
	.dk i {
		position: absolute;
		right: 6px;
		bottom: 6px;
		border: 7px solid #fff;
		border-top-color: transparent;
		border-left-color: transparent;
	}
	.adj {
		width: 149px;
		height: 50px;
		margin: 0 16px 0 22px;
		box-sizing: border-box;
		background: #f5f6f8;
		border: 1.5px solid #ddd;
		border-radius: 8px;
		text-align: center;
		line-height: 46px;
	}
	.fold {
		position: absolute;
		right: 13px;
		top: 2px;
		width: 50px;
		height: 68px;
		background: #999;
		border-radius: 14px 0 0 14px;
		display: flex;
		align-items: center;
		justify-content: center;
	}

	.box {
		margin: 0 13px 0 12px;
		border: 1px solid #ddd;
		border-width: 2px 1px;
		overflow: hidden;
		background: #fff;
	}
	.box svg {
		margin-left: -1px;
	}
	.mark {
		font: 700 112px 'Noto Sans CJK SC', sans-serif;
		fill: #f7f7f7;
	}
	.g-dash {
		stroke: #c9b48c;
		stroke-dasharray: 10 8;
		stroke-width: 1.5;
	}
	.g-dot {
		stroke: #ccc;
		stroke-dasharray: 1 1;
	}
	.g-green {
		stroke: #2aa52a;
		stroke-dasharray: 9 7;
		stroke-width: 1.2;
	}
	.axis {
		font: 400 42px Roboto, sans-serif;
		fill: #888;
	}
	.axis.sm {
		font: 400 40px Roboto, 'Noto Sans CJK SC', sans-serif;
	}
	.ln {
		fill: none;
		stroke-width: 3;
		stroke-linejoin: round;
	}
	.ln.thick {
		stroke-width: 3.5;
	}
	.ln.hair {
		stroke-width: 1;
	}
	.limit {
		font: 400 34px Roboto, 'Noto Sans CJK SC', sans-serif;
		fill: #0a9b0a;
	}
	.kd {
		font: 400 42px Roboto, sans-serif;
	}
	.kd.green {
		fill: #0a9b0a;
	}
	.kd.red {
		fill: #c8302e;
	}
	.note {
		font: 400 42px Roboto, sans-serif;
		fill: #222;
	}
	.wide {
		letter-spacing: 6px;
	}
	.wide2 {
		letter-spacing: 3px;
	}
	.bn {
		font: 400 38px Roboto, sans-serif;
		fill: #e85d04;
		text-anchor: middle;
	}
	.bn.white {
		fill: #fff;
	}

	.dates {
		height: 78px;
		display: flex;
		align-items: center;
		justify-content: space-between;
		padding: 0 18px;
		font-size: 44px;
		color: #888;
	}
	.scroller {
		margin: 7px 18px 0;
		height: 33px;
		display: flex;
		align-items: center;
		justify-content: space-between;
		background: linear-gradient(#f0f1f3, #f0f1f3) center / 100% 20px no-repeat;
	}
	.grip {
		width: 53px;
		height: 33px;
		border-radius: 6px;
		background: #fff;
		box-shadow: 0 1px 4px rgba(0, 0, 0, 0.2);
		display: flex;
		justify-content: center;
		align-items: center;
		gap: 4px;
	}
	.grip i {
		width: 1.5px;
		height: 18px;
		background: #777;
	}
	.banner {
		margin: 31px 21px 0 20px;
		height: 74px;
		box-sizing: border-box;
		border-radius: 40px 40px 0 0;
		background: #fdeee6;
		display: flex;
		align-items: center;
		padding: 22px 0 0 32px;
		overflow: hidden;
		white-space: nowrap;
	}
	.b-text {
		margin-left: 61px;
		width: 913px;
		font-size: 44px;
		color: #e0651e;
	}
	.b-arrow {
		width: 57px;
		font-size: 36px;
		color: #f0b48c;
	}
	.fade {
		color: #f9dcc8;
	}
	.b-sep {
		width: 1px;
		height: 40px;
		background: #e0651e;
		margin-right: 17px;
	}
	.foot {
		height: 193px;
		box-sizing: border-box;
		border-top: 1px solid #ddd;
		background: #f5f6f8;
		display: flex;
		align-items: flex-start;
		position: relative;
	}
	.sector {
		width: 338px;
		padding-left: 12px;
		box-sizing: border-box;
		position: relative;
		white-space: nowrap;
	}
	.caret {
		position: absolute;
		left: 144px;
		top: 11px;
		border: 11.5px solid transparent;
		border-bottom: 9px solid #777;
		border-top: 0;
	}
	.s-val {
		margin: 30px 0 0 66px;
		font-size: 44px;
		line-height: 52px;
		color: #0a9b0a;
	}
	.s-name {
		margin-top: 6px;
		font-size: 41px;
		line-height: 50px;
		color: #666;
	}
	.s-name span {
		color: #0a9b0a;
		margin-left: 4px;
	}
	.trade {
		width: 213px;
		height: 108px;
		margin-top: 22px;
		border-radius: 22px;
		color: #fff;
		font-size: 50px;
		line-height: 108px;
		text-align: center;
	}
	.buy {
		background: linear-gradient(#f2534d, #ec7470);
	}
	.sell {
		margin-left: 17px;
		background: linear-gradient(#3a74f5, #6d9bf8);
	}
	.act {
		display: flex;
		flex-direction: column;
		align-items: center;
		font-size: 36px;
		color: #666;
		position: absolute;
		top: 16px;
		white-space: nowrap;
	}
	.act svg,
	.act b {
		height: 66px;
	}
	.act span {
		margin-top: 6px;
		line-height: 48px;
	}
	.act b {
		font-size: 62px;
		line-height: 66px;
		color: #333;
		font-weight: 500;
	}
	.a-cancel {
		left: 838px;
	}
	.a-fav {
		left: 973px;
	}
	.a-more {
		left: 1143px;
	}
</style>
